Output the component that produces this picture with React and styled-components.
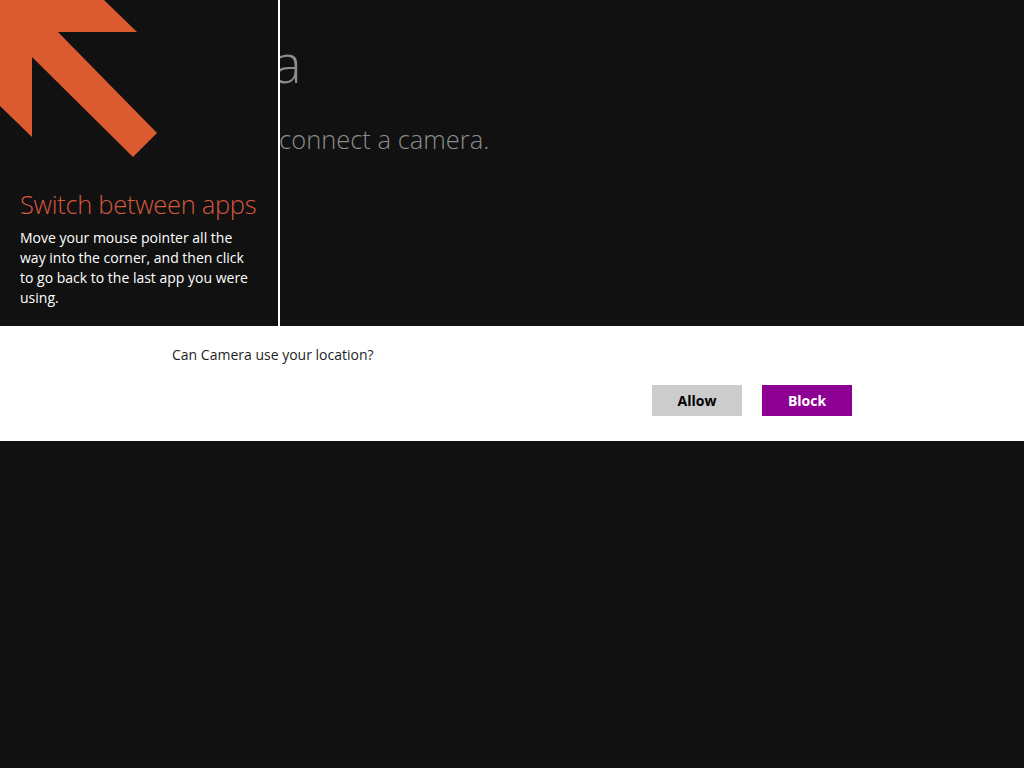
import React from 'react'
import styled, { createGlobalStyle } from 'styled-components'

const GlobalStyle = createGlobalStyle`
  html, body {
    margin: 0;
    padding: 0;
    background: #111111;
  }
  body {
    font-family: "Open Sans", "Noto Sans", "Liberation Sans", sans-serif;
  }
`

const Screen = styled.div`
  width: 1024px;
  height: 768px;
  background: #111111;
  display: flex;
  flex-direction: column;
  overflow: hidden;
`

const Stage = styled.div`
  position: relative;
  height: 326px;
  flex-shrink: 0;
`

const AppPage = styled.div`
  padding: 22px 0 0 120px;
  display: flex;
  flex-direction: column;
`

const PageTitle = styled.h1`
  margin: 0;
  font-size: 54px;
  font-weight: 300;
  line-height: 80px;
  color: #8c8c8c;
  letter-spacing: -1.5px;
`

const PageText = styled.p`
  margin: 21px 0 0 14px;
  font-size: 25.5px;
  font-weight: 300;
  line-height: 32px;
  color: #8c8c8c;
`

const TipPanel = styled.div`
  position: absolute;
  top: 0;
  left: 0;
  width: 278px;
  height: 326px;
  background: #111111;
  border-right: 2px solid #ffffff;
  display: flex;
  flex-direction: column;
`

const ArrowBox = styled.div`
  height: 184px;
  flex-shrink: 0;
`

const TipBody = styled.div`
  padding: 0 20px;
`

const TipTitle = styled.h2`
  margin: 0;
  font-size: 25.5px;
  font-weight: 300;
  line-height: 40px;
  letter-spacing: -0.3px;
  white-space: nowrap;
  color: #d6573d;
`

const TipText = styled.p`
  margin: 4px 0 0;
  font-size: 14px;
  line-height: 20px;
  color: #ffffff;
`

const Dialog = styled.div`
  height: 115px;
  flex-shrink: 0;
  background: #ffffff;
  display: flex;
  flex-direction: column;
  padding: 19px 0 0 172px;
  box-sizing: border-box;
`

const DialogInner = styled.div`
  width: 680px;
  display: flex;
  flex-direction: column;
`

const Question = styled.div`
  font-size: 14px;
  line-height: 20px;
  color: #1e1e1e;
`

const Buttons = styled.div`
  display: flex;
  justify-content: flex-end;
  gap: 20px;
  margin-top: 20px;
`

const Button = styled.button`
  width: 90px;
  height: 31px;
  border: none;
  padding: 0;
  font-family: inherit;
  font-size: 14px;
  font-weight: 700;
  background: ${p => (p.$primary ? '#8e0094' : '#cccccc')};
  color: ${p => (p.$primary ? '#ffffff' : '#000000')};
  cursor: pointer;
`

const CornerArrow = () => (
  <svg width="170" height="170" viewBox="0 0 170 170">
    <polygon
      fill="#dc5a30"
      points="0,0 104,0 137,32 58,32 157,133 133,157 32,57 32,137 0,106"
    />
  </svg>
)

export default function App() {
  return (
    <>
      <GlobalStyle />
      <Screen>
        <Stage>
          <AppPage>
            <PageTitle>Camera</PageTitle>
            <PageText>You need to connect a camera.</PageText>
          </AppPage>
          <TipPanel>
            <ArrowBox>
              <CornerArrow />
            </ArrowBox>
            <TipBody>
              <TipTitle>Switch between apps</TipTitle>
              <TipText>
                Move your mouse pointer all the way into the corner, and then click to go back to the last app you were using.
              </TipText>
            </TipBody>
          </TipPanel>
        </Stage>
        <Dialog>
          <DialogInner>
            <Question>Can Camera use your location?</Question>
            <Buttons>
              <Button>Allow</Button>
              <Button $primary>Block</Button>
            </Buttons>
          </DialogInner>
        </Dialog>
      </Screen>
    </>
  )
}
